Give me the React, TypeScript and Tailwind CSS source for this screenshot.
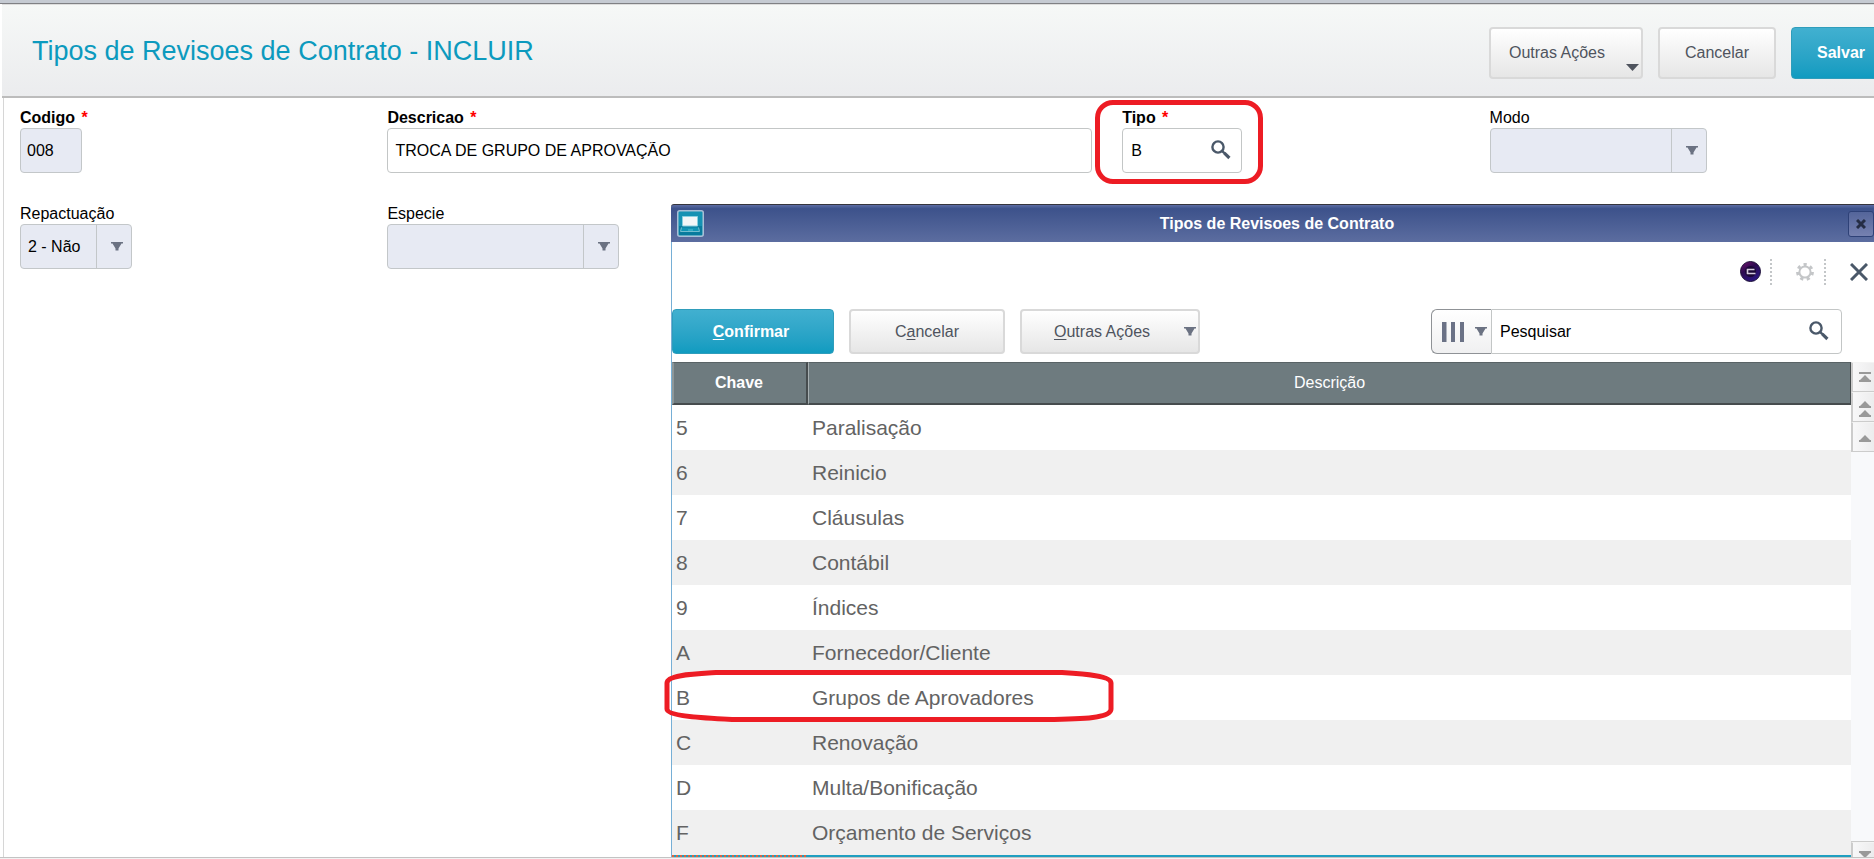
import type { ReactNode } from "react";

const rows: [string, string][] = [
  ["5", "Paralisação"],
  ["6", "Reinicio"],
  ["7", "Cláusulas"],
  ["8", "Contábil"],
  ["9", "Índices"],
  ["A", "Fornecedor/Cliente"],
  ["B", "Grupos de Aprovadores"],
  ["C", "Renovação"],
  ["D", "Multa/Bonificação"],
  ["F", "Orçamento de Serviços"],
];

const grayButton =
  "rounded-[4px] border-2 border-[#d9d9d9] bg-linear-to-b from-white to-[#e6e6e6] text-[#4f545e]";
const tealButton =
  "rounded-[4px] border border-[#2f9dbb] bg-linear-to-b from-[#41b0d0] to-[#0f9bc0] font-bold text-white";

function Magnifier() {
  return (
    <svg viewBox="0 0 20 20" className="size-5" fill="none" stroke="#4a5869">
      <circle cx="7" cy="7" r="5.6" strokeWidth="2.4" />
      <path d="M11 11l3 2.6" strokeWidth="2.4" />
      <path d="M13.4 13.2l5 4.8" strokeWidth="3.2" />
    </svg>
  );
}

function DropArrow() {
  return (
    <svg viewBox="0 0 12 9" className="h-[9px] w-3" fill="#6b7282">
      <path d="M0 0h12v1.500h-1.500L7.500 6.500v2h-3v-2L1.500 1.500H0z" />
    </svg>
  );
}

function Field({ id, label, required, className = "", children }: {
  id: string; label: string; required?: boolean; className?: string; children: ReactNode;
}) {
  return (
    <div className={`flex flex-col items-start ${className}`}>
      <label htmlFor={id} className={`leading-5 ${required ? "font-bold" : ""}`}>
        {label}
        {required && <span className="ml-[2px] text-[#ff0000]"> *</span>}
      </label>
      {children}
    </div>
  );
}

function SelectBox({ id, value, width }: { id: string; value: string; width: string }) {
  return (
    <div className={`relative h-[45px] ${width}`}>
      <select
        id={id}
        defaultValue={value}
        className="size-full appearance-none rounded-[4px] border border-[#c3c7c9] bg-[#e7eaf3] pl-[7px] text-black"
      >
        <option value={value}>{value}</option>
      </select>
      <span className="pointer-events-none absolute inset-y-px right-px flex w-[35px] items-center justify-center border-l border-[#c3c7c9] pl-[6px]">
        <DropArrow />
      </span>
    </div>
  );
}

function ScrollButton({ label, children }: { label: string; children: ReactNode }) {
  return (
    <button
      aria-label={label}
      className="flex h-[30px] w-[29px] shrink-0 items-center justify-center border-y border-l-2 border-[#cccccc] border-t-[#f4f4f4] bg-linear-to-r from-[#f8f8f9] to-[#e9e9ea] pr-[3px]"
    >
      <svg viewBox="0 0 12 20" className="h-5 w-3" fill="#999999">{children}</svg>
    </button>
  );
}

function Dialog() {
  return (
    <section
      aria-label="Tipos de Revisoes de Contrato"
      className="absolute top-[106px] -right-[9px] bottom-0 left-[667px] flex flex-col bg-white"
    >
      <header className="grid h-[38px] shrink-0 grid-cols-[1fr_auto_1fr] items-center rounded-t-[3px] border-t border-[#35353d] bg-linear-to-b from-[#5d6da4] from-0% via-[#3d528b] via-10% to-[#5c6da0] px-[6px]">
        <svg viewBox="0 0 27 27" className="size-[27px]">
          <rect x="0.75" y="0.75" width="25.5" height="25.5" rx="2" fill="#1592b3" stroke="#a9bfd6" strokeWidth="1.5" />
          <path d="M2 16h23v9H2z" fill="#087b9d" />
          <path d="M5.500 6.500h15v9.500h-15z" fill="#f3f6f7" stroke="#8ad0e0" />
          <path d="M4.500 17.500L3.500 21.500h19l-1-4" fill="#1294b4" stroke="#74bdcf" />
          <path d="M11 20h5" stroke="#3eb0c9" strokeWidth="1.5" />
        </svg>
        <h2 className="font-bold text-white">Tipos de Revisoes de Contrato</h2>
        <button
          aria-label="Fechar janela"
          className="mr-[3px] flex size-[26px] items-center justify-center justify-self-end rounded-[3px] border border-[#2e4177] bg-linear-to-b from-[#54659a] to-[#7681b0]"
        >
          <svg viewBox="0 0 10 10" className="size-[10px]" stroke="#252d45" strokeWidth="3">
            <path d="M1 1l8 8M9 1l-8 8" />
          </svg>
        </button>
      </header>

      <div className="flex min-h-0 flex-1 flex-col border-l border-[#76afd6]">
        <div className="flex h-[59px] shrink-0 items-center justify-end pr-[15px]">
          <button aria-label="Assistente" className="size-[21px]">
            <svg viewBox="0 0 21 21" className="size-full">
              <defs>
                <linearGradient id="orb" x1="0" y1="0" x2="0.6" y2="1">
                  <stop offset="0" stopColor="#7a1470" />
                  <stop offset="0.45" stopColor="#2c0a50" />
                  <stop offset="1" stopColor="#2b1580" />
                </linearGradient>
              </defs>
              <circle cx="10.5" cy="10.5" r="10" fill="url(#orb)" stroke="#1d1038" />
              <circle cx="10.5" cy="10.5" r="5.5" fill="#1b0836" />
              <path d="M14.500 8.500h-7v4h8" fill="none" stroke="#d5cbe0" strokeWidth="1.6" />
            </svg>
          </button>
          <span className="ml-[9px] h-[26px] border-l-2 border-dotted border-[#c3c6c8]" />
          <button aria-label="Configurações" className="ml-6 size-[18px]">
            <svg viewBox="0 0 18 18" className="size-full" fill="none" stroke="#c4c6c8">
              <circle cx="9" cy="9" r="5.6" strokeWidth="2" />
              <circle cx="9" cy="9" r="7.5" strokeWidth="2.8" strokeDasharray="3.2 3.53" />
            </svg>
          </button>
          <span className="ml-[10px] h-[26px] border-l-2 border-dotted border-[#c3c6c8]" />
          <button aria-label="Fechar" className="ml-6 size-[18px]">
            <svg viewBox="0 0 18 18" className="size-full" stroke="#4a5869" strokeWidth="3">
              <path d="M1 1l16 16M17 1L1 17" />
            </svg>
          </button>
        </div>

        <div className="mt-2 flex h-[45px] shrink-0 gap-[15px] pr-[41px]">
          <button className={`w-[162px] pr-1 ${tealButton}`}>
            <span className="underline underline-offset-2">C</span>onfirmar
          </button>
          <button className={`w-[156px] ${grayButton}`}>
            C<span className="underline underline-offset-2">a</span>ncelar
          </button>
          <button className={`flex w-[180px] items-center justify-between pr-[2px] pl-8 ${grayButton}`}>
            <span><span className="underline underline-offset-2">O</span>utras Ações</span>
            <DropArrow />
          </button>
          <div className="ml-auto flex w-[411px]">
            <button
              aria-label="Escolher colunas"
              className="flex w-[60px] items-center justify-between rounded-l-[6px] border border-r-0 border-[#8f9296] bg-linear-to-b from-white to-[#f0f0f1] pr-1 pl-[10px]"
            >
              <svg viewBox="0 0 23 20" className="h-5 w-[23px]" fill="#6b7286">
                <path d="M0 0h4.500v20H0zM9 0h4v20H9zM18 0h4v20h-4z" />
              </svg>
              <DropArrow />
            </button>
            <div className="relative flex-1">
              <input
                aria-label="Pesquisar"
                placeholder="Pesquisar"
                className="size-full rounded-r-[4px] border border-[#c3c6c6] pl-2 placeholder:text-black placeholder:opacity-100"
              />
              <button aria-label="Buscar" className="absolute top-3 right-[13px]">
                <Magnifier />
              </button>
            </div>
          </div>
        </div>

        <div className="mt-2 flex min-h-0 flex-1">
          <table className="h-fit flex-1 table-fixed border-separate border-spacing-0">
            <thead>
              <tr className="h-[43px] bg-[#6e7b7f] text-white">
                <th scope="col" className="w-[136px] border-t border-r-2 border-b-2 border-l-2 border-t-[#596366] border-r-[#464c4e] border-b-[#464c4e] border-l-[#8d9799] pr-[2px] font-bold">
                  Chave
                </th>
                <th scope="col" className="border-t border-r border-b-2 border-l border-t-[#596366] border-r-[#464c4e] border-b-[#464c4e] border-l-[#a7afb1] font-normal">
                  Descrição
                </th>
              </tr>
            </thead>
            <tbody className="text-[21px] text-[#636363]">
              {rows.map(([key, description]) => (
                <tr key={key} className="h-[45px] bg-white even:bg-[#f0f0f0]">
                  <td className="relative pl-1">
                    {key}
                    {key === "B" && (
                      <svg viewBox="0 0 450 54" className="pointer-events-none absolute -top-[6px] -left-[8px] z-10 h-[54px] w-[450px]" fill="none" stroke="#ed1c24" strokeWidth="5">
                        <path d="M52 3.500H398C422 5 447 7 447 14V40C447 49 420 50 382 50.500H68C38 49 3 47 3 40V14C3 6 28 5 52 3.500Z" />
                      </svg>
                    )}
                  </td>
                  <td className="pl-1">{description}</td>
                </tr>
              ))}
              <tr className="h-[2px]">
                <td className="bg-[repeating-linear-gradient(90deg,#e0643c_0_2px,#1f9fc0_2px_4px)]" />
                <td className="bg-[#1f9fc0]" />
              </tr>
            </tbody>
          </table>
          <div className="flex w-8 flex-col overflow-hidden bg-[#f8f9fb]">
            <ScrollButton label="Primeira linha"><path d="M0 5h12v2H0zM6 8l5 5h1v2H0v-2h1z" /></ScrollButton>
            <ScrollButton label="Página anterior"><path d="M6 4l5 5h1v2H0V9h1zM6 13l5 5h1v2H0v-2h1z" /></ScrollButton>
            <ScrollButton label="Linha anterior"><path d="M6 8l5 5h1v2H0v-2h1z" /></ScrollButton>
            <div className="mt-auto -mb-[15px] border-t border-[#cccccc]">
              <ScrollButton label="Próxima linha"><path d="M0 4h12v2h-1l-5 5-5-5H0z" /></ScrollButton>
            </div>
          </div>
        </div>
      </div>
    </section>
  );
}

export default function App() {
  return (
    <div className="flex h-screen flex-col overflow-hidden bg-white font-['Liberation_Sans',Arial,sans-serif] text-base text-black">
      <div className="h-1 shrink-0 border-b border-[#7f8084] bg-[#c5cad2]" />
      <header className="ml-[2px] flex shrink-0 items-start justify-between border-t border-b-2 border-t-[#dddddd] border-b-[#bcbcbc] bg-linear-to-b from-[#f6f8f7] to-[#ebecee] pt-[22px] pb-[17px] pl-[30px]">
        <h1 className="text-[27px] leading-[48px] text-[#0c9abe]">Tipos de Revisoes de Contrato - INCLUIR</h1>
        <div className="-mr-[17px] flex h-[52px] gap-[15px]">
          <button className={`relative w-[154px] pr-[18px] ${grayButton}`}>
            Outras Ações
            <svg viewBox="0 0 13 7" className="absolute right-[2px] bottom-[6px] h-[7px] w-[13px]" fill="#4f545e">
              <path d="M0 0h13L6.500 7z" />
            </svg>
          </button>
          <button className={`w-[118px] ${grayButton}`}>Cancelar</button>
          <button className={`w-[100px] ${tealButton}`}>Salvar</button>
        </div>
      </header>

      <main className="relative ml-[3px] flex-1 overflow-hidden border-l border-[#d6d6d6]">
        <form className="grid grid-cols-5 gap-y-[31px] pt-[10px] pr-[17px] pl-4">
          <Field id="codigo" label="Codigo" required>
            <input id="codigo" defaultValue="008" className="h-[45px] w-[62px] rounded-[4px] border border-[#c3c7c9] bg-[#e7eaf3] px-[6px]" />
          </Field>
          <Field id="descricao" label="Descricao" required className="col-span-2 pr-[30px]">
            <input id="descricao" defaultValue="TROCA DE GRUPO DE APROVAÇÃO" className="h-[45px] w-full rounded-[4px] border border-[#c3c6c6] px-[7px]" />
          </Field>
          <Field id="tipo" label="Tipo" required className="relative">
            <div className="relative">
              <input id="tipo" defaultValue="B" className="h-[45px] w-[120px] rounded-[4px] border border-[#c3c6c6] px-2" />
              <button type="button" aria-label="Consultar tipo" className="absolute top-3 right-[11px]">
                <Magnifier />
              </button>
            </div>
            <span className="pointer-events-none absolute -top-2 -left-[27px] h-[84px] w-[168px] rounded-[18px] border-[5px] border-[#ed1c24]" />
          </Field>
          <Field id="modo" label="Modo">
            <SelectBox id="modo" value="" width="w-[217px]" />
          </Field>
          <Field id="repactuacao" label="Repactuação">
            <SelectBox id="repactuacao" value="2 - Não" width="w-[112px]" />
          </Field>
          <Field id="especie" label="Especie">
            <SelectBox id="especie" value="" width="w-[232px]" />
          </Field>
        </form>
        <Dialog />
      </main>
      <footer className="h-[2px] shrink-0 border-t border-[#c3c3c3] bg-[#f2f2f2]" />
    </div>
  );
}
